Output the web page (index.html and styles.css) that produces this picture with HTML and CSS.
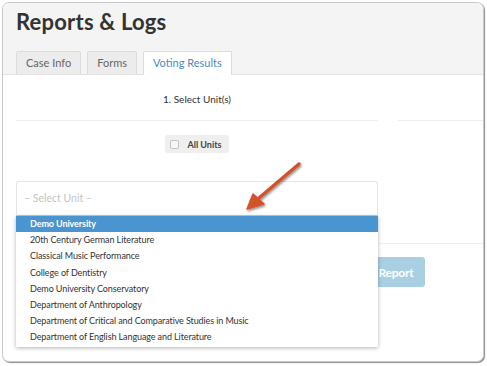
FILE: index.html
```html
<!DOCTYPE html>
<html lang="en">
<head>
    <meta charset="UTF-8">
    <title>Reports &amp; Logs</title>
    <link rel="stylesheet" href="styles.css">
</head>
<body>
    <div class="window">
        <div class="head">
            <h1>Reports &amp; Logs</h1>
            <div class="tabs">
                <div class="tab">Case Info</div>
                <div class="tab">Forms</div>
                <div class="tab active">Voting Results</div>
            </div>
        </div>

        <div class="content">
            <div class="row-title">
                <div class="cell left">1. Select Unit(s)</div>
                <div class="cell right"></div>
            </div>

            <div class="units">
                <div class="units-col">
                    <div class="all-units">
                        <span class="check"></span>
                        <span>All Units</span>
                    </div>
                    <div class="picker">
                        <div class="select">&ndash; Select Unit &ndash;</div>
                        <ul class="options">
                            <li class="selected">Demo University</li>
                            <li>20th Century German Literature</li>
                            <li>Classical Music Performance</li>
                            <li>College of Dentistry</li>
                            <li>Demo University Conservatory</li>
                            <li>Department of Anthropology</li>
                            <li>Department of Critical and Comparative Studies in Music</li>
                            <li>Department of English Language and Literature</li>
                        </ul>
                    </div>
                </div>
            </div>

            <div class="actions">
                <button class="report-btn">Display Report</button>
            </div>
        </div>

        <!-- annotation arrow -->
        <svg class="arrow" width="70" height="60" viewBox="0 0 70 60">
            <defs>
                <filter id="shadow" x="-20%" y="-20%" width="150%" height="150%">
                    <feDropShadow dx="1" dy="1.5" stdDeviation="1" flood-color="#000" flood-opacity="0.45"/>
                </filter>
            </defs>
            <g filter="url(#shadow)">
                <line x1="59" y1="4" x2="19" y2="38" stroke="#d2532c" stroke-width="3.5" stroke-linecap="round"/>
                <polygon points="7,49 13,34 24,44" fill="#d2532c" stroke="#d2532c" stroke-width="1.5" stroke-linejoin="round"/>
            </g>
        </svg>
    </div>
</body>
</html>
```

FILE: styles.css
```css
body {
    margin: 0;
    background: #fff;
    font-family: Lato, "Open Sans", sans-serif;
    color: #333;
}
.window {
    position: relative;
    margin: 2px;
    width: 480px;
    height: 358px;
    border: 1px solid #c9c9c9;
    border-radius: 7px;
    box-shadow: 1px 1px 1px rgba(0, 0, 0, 0.45);
    overflow: hidden;
    background: #fff;
}
.head {
    background: #f4f4f4;
    border-bottom: 1px solid #e2e2e2;
    padding: 0 0 0 13px;
    height: 71px;
    display: flex;
    flex-direction: column;
    justify-content: space-between;
}
h1 {
    margin: 5px 0 0 0;
    font-size: 22px;
    font-weight: 700;
    color: #333;
    letter-spacing: 0.2px;
}
.tabs {
    display: flex;
    gap: 6px;
}
.tab {
    height: 22px;
    line-height: 22px;
    padding: 0 9px;
    font-size: 11px;
    color: #666;
    background: #ececec;
    border: 1px solid #dcdcdc;
    border-bottom: none;
    border-radius: 2px 2px 0 0;
}
.tab.active {
    background: #fff;
    color: #4a8ac0;
    margin-bottom: -1px;
    height: 23px;
}
.content {
    padding-left: 13px;
}
.row-title {
    display: grid;
    grid-template-columns: 362px 1fr;
    gap: 20px;
}
.cell {
    height: 45px;
    border-bottom: 1px solid #eee;
}
.cell.left {
    text-align: center;
    font-size: 10px;
    line-height: 48px;
    color: #333;
}
.units {
    border-bottom: 1px solid #eee;
    height: 122px;
}
.units-col {
    width: 362px;
    display: flex;
    flex-direction: column;
    align-items: center;
}
.all-units {
    margin-top: 14px;
    height: 18px;
    display: flex;
    align-items: center;
    gap: 8px;
    padding: 0 7px 0 5px;
    background: #efefef;
    border-radius: 3px;
    font-size: 9px;
    font-weight: 700;
    color: #444;
}
.check {
    width: 7px;
    height: 7px;
    border: 1px solid #c4c4c4;
    border-radius: 2px;
    background: #f7f7f7;
}
.picker {
    position: relative;
    align-self: stretch;
    margin-top: 28px;
}
.select {
    height: 33px;
    line-height: 33px;
    border: 1px solid #e6e6e6;
    border-bottom-color: #c9c9c9;
    border-radius: 3px 3px 0 0;
    padding-left: 7px;
    font-size: 10.5px;
    color: #c4c4c4;
}
.options {
    position: absolute;
    top: 100%;
    left: 0;
    right: 0;
    margin: 0;
    padding: 0 0 1px 0;
    list-style: none;
    background: #fff;
    box-shadow: 0 1px 4px rgba(0, 0, 0, 0.3);
    z-index: 2;
}
.options li {
    height: 16.2px;
    line-height: 16.2px;
    padding-left: 14px;
    font-size: 9px;
    letter-spacing: -0.1px;
    color: #333;
}
.options li.selected {
    background: #4a94d0;
    color: #fff;
    font-weight: 700;
}
.actions {
    padding: 13px 0 0 310px;
}
.report-btn {
    height: 30px;
    padding: 0 11px 0 12px;
    border: none;
    border-radius: 3px;
    background: #a9cfe3;
    color: #fff;
    font-family: Lato, sans-serif;
    font-size: 12px;
    font-weight: 700;
    letter-spacing: -0.2px;
}
.arrow {
    position: absolute;
    left: 237px;
    top: 157px;
    z-index: 3;
}
```
